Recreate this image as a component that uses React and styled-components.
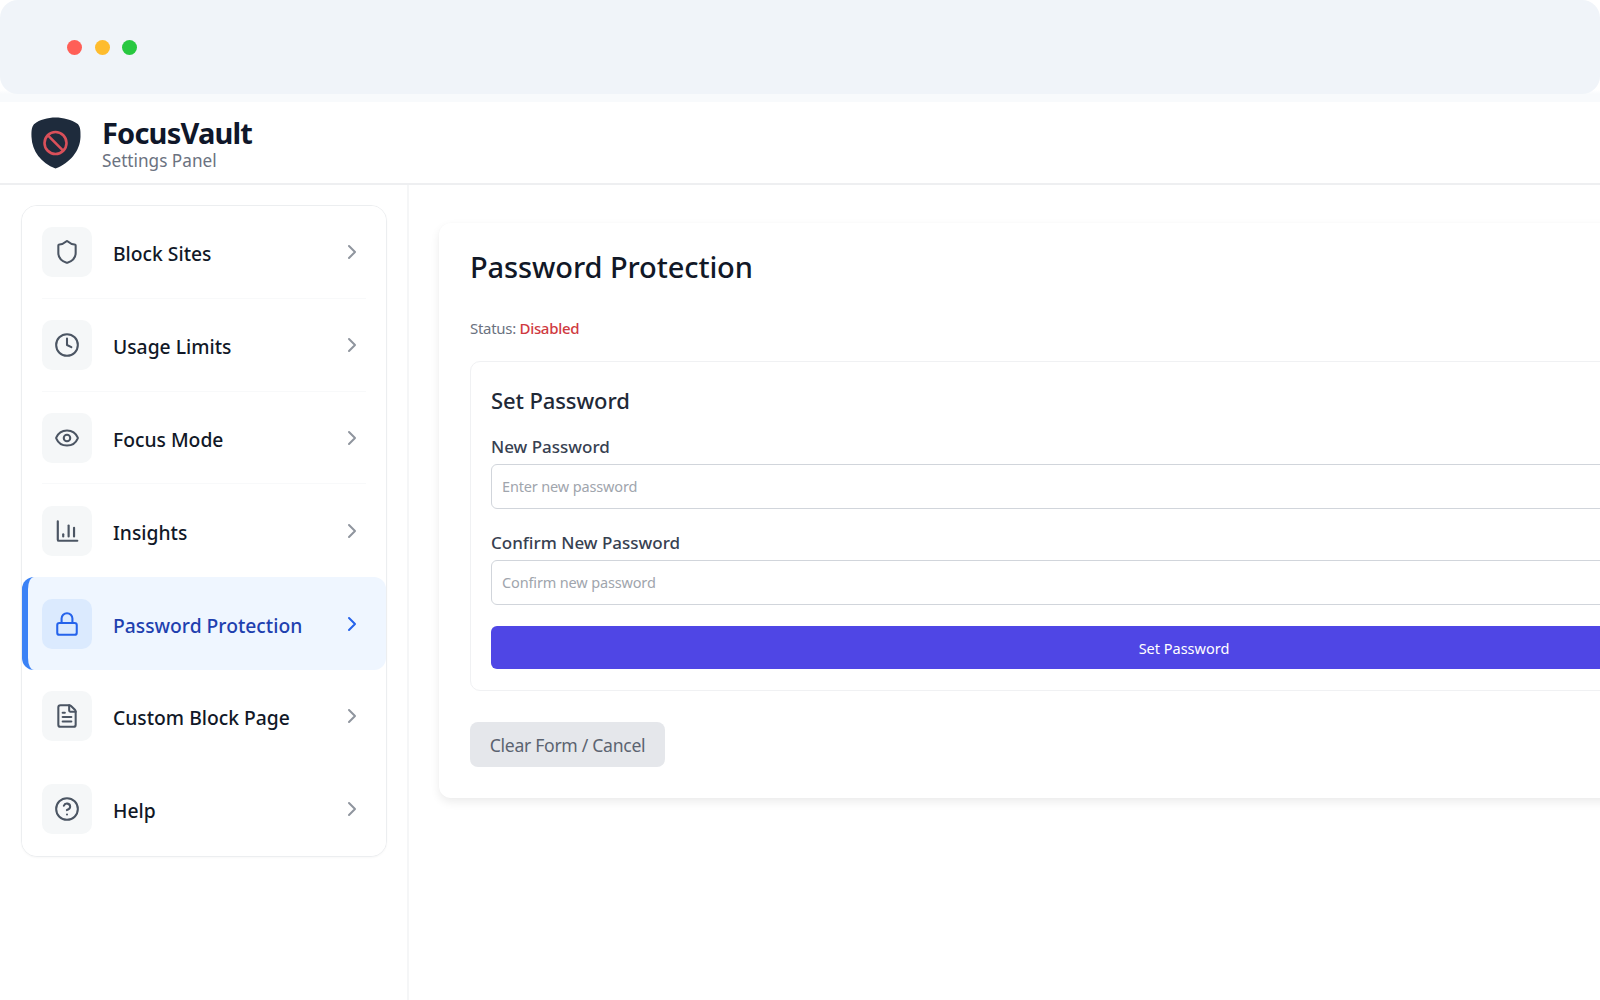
import React from 'react'
import styled, { createGlobalStyle } from 'styled-components'
import { Shield, Clock, Eye, Lock, FileText, CircleHelp, ChevronRight } from 'lucide-react'

const GlobalStyle = createGlobalStyle`
  html, body {
    margin: 0;
    padding: 0;
    background: #fff;
    overflow: hidden;
  }
  * { box-sizing: border-box; }
`

const Page = styled.div`
  width: 1600px;
  height: 1000px;
  overflow: hidden;
  display: flex;
  flex-direction: column;
  font-family: "Noto Sans", "Open Sans", Arial, sans-serif;
  color: #111827;
  background: #fff;
`

const ChromeStrip = styled.div`
  height: 102px;
  flex-shrink: 0;
  background: linear-gradient(#fff 0, #fff 90px, #f8fafc 94px);
`

const ChromeBar = styled.div`
  height: 94px;
  background: #f0f4f9;
  border-radius: 18px;
  display: flex;
  align-items: center;
  gap: 12.5px;
  padding-left: 67px;
`

const Dot = styled.span`
  width: 15px;
  height: 15px;
  border-radius: 50%;
  background: ${p => p.$color};
`

const Header = styled.header`
  height: 83px;
  flex-shrink: 0;
  display: flex;
  align-items: center;
  gap: 21px;
  padding: 0 0 0 31px;
  border-bottom: 2px solid #eeeff1;
`

const Brand = styled.div`
  display: flex;
  flex-direction: column;
  padding-top: 4px;
`

const BrandName = styled.div`
  font-size: 29px;
  line-height: 30px;
  font-weight: 700;
  letter-spacing: -0.8px;
  color: #0f172a;
`

const BrandSub = styled.div`
  margin-top: 3px;
  font-size: 17.2px;
  line-height: 20px;
  color: #6b7280;
`

const Body = styled.div`
  flex: 1;
  display: flex;
  min-height: 0;
`

const Sidebar = styled.aside`
  width: 409px;
  flex-shrink: 0;
  padding: 20px 20px 0 21px;
  border-right: 2px solid #f5f6f7;
`

const NavCard = styled.nav`
  border: 1px solid #eceef0;
  border-radius: 16px;
  overflow: hidden;
  background: #fff;
  box-shadow: 0 1px 2px rgba(0, 0, 0, 0.03);
`

const NavItem = styled.div`
  position: relative;
  height: 92.8px;
  display: flex;
  align-items: center;
  padding: 0 22px 0 ${p => (p.$active ? '14px' : '20px')};
  background: ${p => (p.$active ? '#eff6ff' : '#fff')};
  border-left: ${p => (p.$active ? '6px solid #3b82f6' : 'none')};
  border-radius: ${p => (p.$active ? '12px' : '0')};
  color: ${p => (p.$active ? '#1e40af' : '#111827')};

  ${p => !p.$plain && `
    &::after {
      content: '';
      position: absolute;
      left: 20px;
      right: 20px;
      bottom: 0;
      height: 1px;
      background: #f8f9fa;
    }
  `}
`

const IconBox = styled.span`
  width: 50px;
  height: 50px;
  flex-shrink: 0;
  border-radius: 10px;
  display: flex;
  align-items: center;
  justify-content: center;
  background: ${p => (p.$active ? '#dbeafe' : '#f5f7f8')};
  color: ${p => (p.$active ? '#2563eb' : '#4b5563')};
`

const NavLabel = styled.span`
  flex: 1;
  margin-left: 21px;
  padding-top: 3px;
  font-size: 19.3px;
  font-weight: 500;
`

const Chevron = styled(ChevronRight)`
  color: ${p => (p.$active ? '#2563eb' : '#8f959e')};
`

const Main = styled.main`
  flex: 1;
  min-width: 0;
  padding: 38px 0 0 30px;
`

const Panel = styled.section`
  width: 1500px;
  height: 575px;
  padding: 24px 31px;
  border-radius: 12px;
  background: #fff;
  box-shadow: 0 4px 10px rgba(0, 0, 0, 0.08), 0 0 2px rgba(0, 0, 0, 0.02);
`

const Title = styled.h1`
  margin: 0;
  font-size: 29px;
  line-height: 40px;
  font-weight: 500;
  letter-spacing: -0.1px;
  color: #111827;
`

const Status = styled.p`
  margin: 31px 0 0;
  font-size: 15px;
  line-height: 20px;
  letter-spacing: -0.3px;
  color: #6b7280;
`

const StatusValue = styled.span`
  color: #cf3a3f;
  font-weight: 500;
`

const FormCard = styled.div`
  margin-top: 23px;
  width: 1428px;
  height: 330px;
  padding: 21px 20px;
  border: 1.5px solid #f0f1f3;
  border-radius: 10px;
`

const FormTitle = styled.h2`
  margin: 0 0 19px;
  font-size: 22px;
  line-height: 34px;
  font-weight: 500;
  letter-spacing: -0.1px;
  color: #1f2937;
`

const Field = styled.div`
  margin-bottom: 23px;

  &:last-of-type {
    margin-bottom: 21px;
  }
`

const FieldLabel = styled.label`
  display: block;
  margin-bottom: 6px;
  font-size: 17px;
  line-height: 22px;
  font-weight: 500;
  color: #374151;
`

const TextInput = styled.input`
  display: block;
  width: 100%;
  height: 45px;
  padding: 0 10px 2px;
  border: 1.5px solid #d1d5db;
  border-radius: 6px;
  background: #fff;
  font: inherit;
  font-size: 14.5px;
  letter-spacing: -0.15px;
  outline: none;

  &::placeholder {
    color: #a0a5ad;
    opacity: 1;
  }
`

const PrimaryButton = styled.button`
  display: block;
  width: 100%;
  height: 43px;
  border: none;
  border-radius: 6px;
  background: #4f46e5;
  color: #fff;
  font: inherit;
  font-size: 14.5px;
  font-weight: 400;
`

const SecondaryButton = styled.button`
  display: block;
  margin-top: 31px;
  width: 195px;
  height: 45px;
  border: none;
  border-radius: 8px;
  background: #e5e7eb;
  color: #5b6370;
  font: inherit;
  font-size: 17.6px;
  letter-spacing: -0.3px;
`

const InsightsIcon = ({ size = 24 }) => (
  <svg width={size} height={size} viewBox="0 0 24 24" fill="none" stroke="currentColor" strokeWidth="2" strokeLinecap="round" strokeLinejoin="round">
    <path d="M3.5 3v17a1 1 0 0 0 1 1h17" />
    <path d="M8.5 17v-2" />
    <path d="M13.5 17V7" />
    <path d="M18.5 17V9" />
  </svg>
)

const LogoMark = () => (
  <svg width="50" height="52" viewBox="0 0 50 52">
    <path
      d="M24.5 0.5C32 0.5 41 3 46 6.5C49 8.6 49.8 12.5 49.5 20C49 34 39 46 24.5 51.5C10 46 1 34 0.5 20C0.2 12.5 1 8.6 4 6.5C8 3 17 0.5 24.5 0.5Z"
      fill="#1e2b3c"
    />
    <circle cx="24.5" cy="26" r="11" fill="none" stroke="#d9505a" strokeWidth="2.6" />
    <path d="M16.9 18.4L32.1 33.6" stroke="#d9505a" strokeWidth="2.6" />
  </svg>
)

const navItems = [
  { label: 'Block Sites', icon: Shield },
  { label: 'Usage Limits', icon: Clock },
  { label: 'Focus Mode', icon: Eye },
  { label: 'Insights', icon: InsightsIcon, plain: true },
  { label: 'Password Protection', icon: Lock, active: true, plain: true },
  { label: 'Custom Block Page', icon: FileText, plain: true },
  { label: 'Help', icon: CircleHelp, plain: true },
]

const App = () => {
  return (
    <Page>
      <GlobalStyle />
      <ChromeStrip>
        <ChromeBar>
          <Dot $color="#ff5f57" />
          <Dot $color="#febc2e" />
          <Dot $color="#28c840" />
        </ChromeBar>
      </ChromeStrip>
      <Header>
        <LogoMark />
        <Brand>
          <BrandName>FocusVault</BrandName>
          <BrandSub>Settings Panel</BrandSub>
        </Brand>
      </Header>
      <Body>
        <Sidebar>
          <NavCard>
            {navItems.map(item => {
              const Icon = item.icon
              return (
                <NavItem key={item.label} $active={item.active} $plain={item.plain}>
                  <IconBox $active={item.active}>
                    <Icon size={26} strokeWidth={1.9} />
                  </IconBox>
                  <NavLabel>{item.label}</NavLabel>
                  <Chevron size={24} $active={item.active} />
                </NavItem>
              )
            })}
          </NavCard>
        </Sidebar>
        <Main>
          <Panel>
            <Title>Password Protection</Title>
            <Status>
              Status: <StatusValue>Disabled</StatusValue>
            </Status>
            <FormCard>
              <FormTitle>Set Password</FormTitle>
              <Field>
                <FieldLabel>New Password</FieldLabel>
                <TextInput type="password" placeholder="Enter new password" />
              </Field>
              <Field>
                <FieldLabel>Confirm New Password</FieldLabel>
                <TextInput type="password" placeholder="Confirm new password" />
              </Field>
              <PrimaryButton>Set Password</PrimaryButton>
            </FormCard>
            <SecondaryButton>Clear Form / Cancel</SecondaryButton>
          </Panel>
        </Main>
      </Body>
    </Page>
  )
}

export default App
